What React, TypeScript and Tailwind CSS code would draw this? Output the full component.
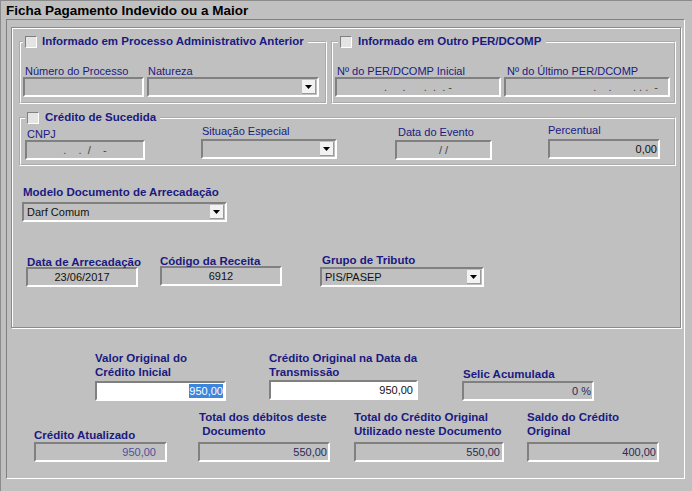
import React from "react";

type Kids = { children?: React.ReactNode; className?: string };

const Lbl = ({ children, className = "" }: Kids) => (
  <div className={`h-[12px] whitespace-pre text-[11px] leading-[12px] text-[#1a1a80] ${className}`}>
    {children}
  </div>
);

const BLbl = ({ children, className = "" }: Kids) => (
  <div className={`whitespace-pre text-[11.5px] font-bold leading-[14px] text-[#1a1a80] ${className}`}>
    {children}
  </div>
);

const sunken =
  "h-[20px] border-2 border-t-[#808080] border-l-[#808080] border-r-white border-b-white";

const Field = ({
  value = "",
  center,
  white,
  className = "",
  text = "text-[#222]",
}: {
  value?: React.ReactNode;
  center?: boolean;
  white?: boolean;
  className?: string;
  text?: string;
}) => (
  <div
    className={`flex items-center ${sunken} ${white ? "bg-white" : "bg-[#c0c0c0]"} ${
      center ? "justify-center" : "justify-end"
    } ${className}`}
  >
    <span className={`whitespace-pre text-[11px] leading-[14px] ${text}`}>{value}</span>
  </div>
);

const Combo = ({ value = "", className = "" }: { value?: string; className?: string }) => (
  <div className={`flex items-center bg-[#c0c0c0] ${sunken} ${className}`}>
    <span className="flex-1 pl-[3px] text-[11px] leading-[14px] text-[#111]">{value}</span>
    <span className="mr-[1px] flex h-[14px] w-[14px] items-center justify-center border-r border-b border-[#9a9a9a] bg-[#f2f2f2]">
      <svg width="7" height="4" viewBox="0 0 7 4">
        <path d="M0 0h7L3.5 4z" fill="#000" />
      </svg>
    </span>
  </div>
);

const Check = () => (
  <span className="block h-[12px] w-[12px] border border-t-[#808080] border-l-[#808080] border-r-white border-b-white bg-[#e4e4e4]" />
);

const Legend = ({ children, className = "" }: Kids) => (
  <legend className={`flex h-[13px] items-center px-[2px] ${className}`}>
    <Check />
    <span className="text-[11.5px] font-bold leading-[13px] text-[#1a1a80]">{children}</span>
  </legend>
);

export default function App() {
  return (
    <div className="h-[491px] w-[692px] overflow-hidden border-t border-l border-[#8c8c8c] bg-[#c0c0c0] font-['Liberation_Sans',Arial,sans-serif]">
      <div className="h-[18px] pl-[5px] text-[13.5px] font-bold leading-[20px] text-black">
        Ficha Pagamento Indevido ou a Maior
      </div>

      <div className="ml-[5px] h-[460px] w-[679px] border border-t-[#808080] border-l-[#808080] border-r-white border-b-white">
        {/* upper panel */}
        <div className="mt-[7px] ml-[4px] h-[301px] w-[670px] border border-[#8a8a8a] shadow-[inset_1px_1px_0_#fff,1px_1px_0_#fff]">
          <div className="mt-[7px] ml-[7px] flex gap-[4px]">
            <fieldset className="h-[69px] w-[308px] min-w-0 [border:2px_groove_#fff]">
              <Legend className="ml-[2px] gap-[5px] pr-[4px]">
                Informado em Processo Administrativo Anterior
              </Legend>
              <div className="mt-[17px] ml-[2px] flex gap-[3px]">
                <div className="w-[121px]">
                  <Lbl className="pl-[2px]">Número do Processo</Lbl>
                  <Field />
                </div>
                <div className="w-[172px]">
                  <Lbl className="pl-[1px]">Natureza</Lbl>
                  <Combo />
                </div>
              </div>
            </fieldset>

            <fieldset className="h-[69px] w-[345px] min-w-0 [border:2px_groove_#fff]">
              <Legend className="ml-[5px] gap-[6px] pr-[5px]">Informado em Outro PER/DCOMP</Legend>
              <div className="mt-[17px] ml-[2px] flex gap-[3px]">
                <div className="w-[166px]">
                  <Lbl className="pl-[2px]">Nº do PER/DCOMP Inicial</Lbl>
                  <Field center value={".     .      .  .  . -"} text="text-[#444]" />
                </div>
                <div className="w-[166px]">
                  <Lbl className="pl-[3px]">Nº do Último PER/DCOMP</Lbl>
                  <Field value={".    .       . . .  -"} className="pr-[10px]" text="text-[#444]" />
                </div>
              </div>
            </fieldset>
          </div>

          <fieldset className="mt-[7px] ml-[7px] h-[55px] w-[657px] min-w-0 [border:2px_groove_#fff]">
            <Legend className="ml-[4px] gap-[6px] pr-[4px]">Crédito de Sucedida</Legend>
            <div className="ml-[4px] flex items-start">
              <div className="mt-[4px] w-[120px]">
                <Lbl className="h-[11px] pl-[2px]">CNPJ</Lbl>
                <Field center value={".    .  /    -"} text="text-[#444]" />
              </div>
              <div className="mt-[1px] ml-[56px] w-[136px]">
                <Lbl className="h-[11px] pl-[1px]">Situação Especial</Lbl>
                <Combo className="mt-[2px]" />
              </div>
              <div className="mt-[2px] ml-[58px] w-[97px]">
                <Lbl className="h-[11px] pl-[3px]">Data do Evento</Lbl>
                <Field center value="/ /" className="mt-[2px]" text="text-[#444]" />
              </div>
              <div className="ml-[56px] w-[112px]">
                <Lbl className="h-[11px]">Percentual</Lbl>
                <Field value="0,00" className="mt-[3px] pr-[1px]" text="text-[#111]" />
              </div>
            </div>
          </fieldset>

          <BLbl className="mt-[19px] ml-[11px] h-[13px] leading-[13px]">Modelo Documento de Arrecadação</BLbl>
          <Combo value="Darf Comum" className="mt-[4px] ml-[10px] w-[205px]" />

          <div className="mt-[31px] flex items-start">
            <div className="mt-[2px] ml-[14px] w-[112px]">
              <BLbl className="h-[12px] pl-[1px] leading-[12px]">Data de Arrecadação</BLbl>
              <Field center value="23/06/2017" text="text-[#111]" />
            </div>
            <div className="mt-[1px] ml-[22px] w-[122px]">
              <BLbl className="h-[12px] leading-[12px]">Código da Receita</BLbl>
              <Field center value="6912" text="text-[#111]" />
            </div>
            <div className="ml-[38px] w-[164px]">
              <BLbl className="h-[12px] pl-[2px] leading-[12px]">Grupo de Tributo</BLbl>
              <Combo value="PIS/PASEP" className="mt-[2px]" />
            </div>
          </div>
        </div>

        {/* values */}
        <div className="mt-[23px] flex items-end">
          <div className="ml-[88px] w-[131px]">
            <BLbl>{"Valor Original do\nCrédito Inicial"}</BLbl>
            <Field
              white
              className="mt-[2px] pr-[1px]"
              text="text-white"
              value={<span className="bg-[#3d86dc] py-[1px]">950,00</span>}
            />
          </div>
          <div className="mb-[1px] ml-[43px] w-[149px]">
            <BLbl>{"Crédito Original na Data da\nTransmissão"}</BLbl>
            <Field white value="950,00" className="mt-[1px] pr-[3px]" text="text-[#111]" />
          </div>
          <div className="ml-[44px] w-[132px]">
            <BLbl className="pl-[1px]">Selic Acumulada</BLbl>
            <Field value="0 %" className="pr-[1px]" text="text-[#2a2a55]" />
          </div>
        </div>

        <div className="mt-[9px] flex items-end">
          <div className="ml-[27px] w-[133px]">
            <BLbl>Crédito Atualizado</BLbl>
            <Field value="950,00" className="pr-[9px]" text="text-[#50509a]" />
          </div>
          <div className="ml-[31px] w-[132px]">
            <BLbl className="pl-[1px]">{"Total dos débitos deste\n Documento"}</BLbl>
            <Field value="550,00" className="mt-[4px] pr-[1px]" text="text-[#2a2a55]" />
          </div>
          <div className="ml-[24px] w-[150px]">
            <BLbl>{"Total do Crédito Original\nUtilizado neste Documento"}</BLbl>
            <Field value="550,00" className="mt-[4px] pr-[2px]" text="text-[#2a2a55]" />
          </div>
          <div className="ml-[23px] w-[132px]">
            <BLbl>{"Saldo do Crédito\nOriginal"}</BLbl>
            <Field value="400,00" className="mt-[4px] pr-[1px]" text="text-[#2a2a55]" />
          </div>
        </div>
      </div>
    </div>
  );
}
